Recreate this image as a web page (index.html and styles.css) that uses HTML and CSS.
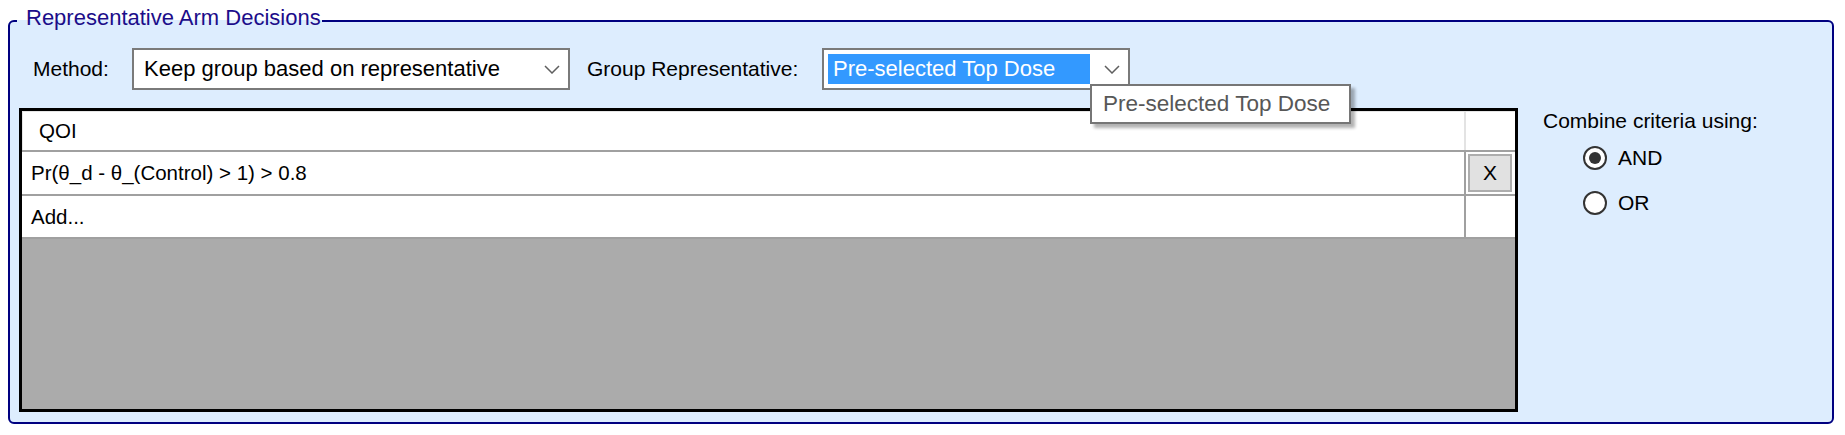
FILE: index.html
```html
<!DOCTYPE html>
<html>
<head>
<meta charset="utf-8">
<link rel="stylesheet" href="styles.css">
</head>
<body>
<fieldset class="group">
  <legend class="group-title">Representative Arm Decisions</legend>
  <div class="toolbar">
    <span class="lbl lbl-method">Method:</span>
    <div class="combo combo-method">
      <span class="combo-text">Keep group based on representative</span>
      <svg class="chev" width="16" height="9" viewBox="0 0 16 9"><polyline points="1,1 8,8 15,1" fill="none" stroke="#5f5f5f" stroke-width="1.5"/></svg>
    </div>
    <span class="lbl lbl-rep">Group Representative:</span>
    <div class="combo combo-rep">
      <span class="combo-sel">Pre-selected Top Dose</span>
      <svg class="chev" width="16" height="9" viewBox="0 0 16 9"><polyline points="1,1 8,8 15,1" fill="none" stroke="#5f5f5f" stroke-width="1.5"/></svg>
    </div>
  </div>
  <div class="main">
    <div class="grid">
      <div class="row head"><div class="cell c1">QOI</div><div class="cell c2"></div></div>
      <div class="row r1"><div class="cell c1">Pr(θ_d - θ_(Control) &gt; 1) &gt; 0.8</div><div class="cell c2"><button class="del">X</button></div></div>
      <div class="row r2"><div class="cell c1">Add...</div><div class="cell c2"></div></div>
      <div class="empty"></div>
    </div>
    <div class="panel">
      <div class="panel-title">Combine criteria using:</div>
      <div class="radio-row r-and"><span class="radio checked"></span><span class="radio-label">AND</span></div>
      <div class="radio-row r-or"><span class="radio"></span><span class="radio-label">OR</span></div>
    </div>
  </div>
</fieldset>
<div class="tooltip">Pre-selected Top Dose</div>
</body>
</html>
```
FILE: styles.css
```css
html, body {
  margin: 0;
  background: #ffffff;
}
body {
  width: 1845px;
  height: 435px;
  overflow: hidden;
  position: relative;
  font-family: "Liberation Sans", Arial, sans-serif;
  color: #000;
}
.group {
  margin: 6px 11px 0 8px;
  padding: 12px 0 10px 9px;
  border: 2px solid #000080;
  border-radius: 6px;
  background: #ddedfe;
  min-width: 0;
}
.group-title {
  margin-left: -2px;
  padding: 0 1px 6px 9px;
  font-size: 22px;
  line-height: 24px;
  color: #1c0d8a;
}
.toolbar {
  display: flex;
  align-items: center;
  height: 42px;
}
.lbl {
  font-size: 21px;
  line-height: 24px;
  box-sizing: border-box;
  white-space: nowrap;
}
.lbl-method {
  width: 113px;
  padding-left: 14px;
}
.lbl-rep {
  width: 252px;
  padding-left: 17px;
}
.combo {
  height: 42px;
  box-sizing: border-box;
  border: 2px solid #7a7a7a;
  background: #fff;
  display: flex;
  align-items: center;
  font-size: 22px;
  white-space: nowrap;
}
.combo-method {
  width: 438px;
  padding-left: 10px;
}
.combo-rep {
  width: 308px;
  padding-left: 4px;
}
.combo-sel {
  width: 262px;
  height: 30px;
  line-height: 30px;
  box-sizing: border-box;
  padding-left: 5px;
  background: #3399ff;
  color: #fff;
}
.chev {
  margin-left: auto;
  margin-right: 8px;
  display: block;
}
.main {
  display: flex;
  align-items: flex-start;
  margin-top: 18px;
}
.grid {
  width: 1499px;
  height: 304px;
  box-sizing: border-box;
  border: 3px solid #000;
  background: #ababab;
  display: flex;
  flex-direction: column;
  flex-shrink: 0;
}
.row {
  display: flex;
  background: #fff;
  border-bottom: 2px solid #a0a0a0;
  font-size: 20.5px;
}
.head {
  height: 39px;
  box-shadow: inset 1px 1px 0 #e6e6e6;
}
.r1 { height: 42px; }
.r2 { height: 41px; }
.cell {
  display: flex;
  align-items: center;
  box-sizing: border-box;
  white-space: nowrap;
}
.c1 {
  width: 1444px;
  padding-left: 9px;
  border-right: 2px solid #a0a0a0;
}
.head .c1 {
  padding-left: 17px;
  border-right-color: #e3e3e3;
}
.c2 {
  width: 49px;
}
.del {
  margin: 2px 3px 2px 2px;
  width: 44px;
  height: 38px;
  box-sizing: border-box;
  border: 2px solid #adadad;
  background: #e1e1e1;
  font-family: "Liberation Sans", Arial, sans-serif;
  font-size: 21px;
  color: #000;
  padding: 0;
}
.empty {
  flex: 1;
}
.panel {
  margin-left: 25px;
  padding-top: 1px;
  font-size: 21px;
  line-height: 24px;
}
.panel-title {
  white-space: nowrap;
}
.radio-row {
  display: flex;
  align-items: center;
  height: 24px;
  padding-left: 40px;
}
.r-and { margin-top: 13px; }
.r-or { margin-top: 21px; }
.radio {
  width: 24px;
  height: 24px;
  box-sizing: border-box;
  border: 2px solid #333;
  border-radius: 50%;
  background: #fff;
  margin-right: 11px;
  display: flex;
  align-items: center;
  justify-content: center;
}
.radio.checked::after {
  content: "";
  width: 12px;
  height: 12px;
  border-radius: 50%;
  background: #333;
}
.tooltip {
  position: absolute;
  left: 1090px;
  top: 84px;
  width: 261px;
  height: 40px;
  box-sizing: border-box;
  border: 2px solid #767676;
  background: #fff;
  color: #575757;
  font-size: 22.5px;
  line-height: 36px;
  padding-left: 11px;
  white-space: nowrap;
  box-shadow: 4px 4px 3px rgba(0, 0, 0, 0.3);
}
```
